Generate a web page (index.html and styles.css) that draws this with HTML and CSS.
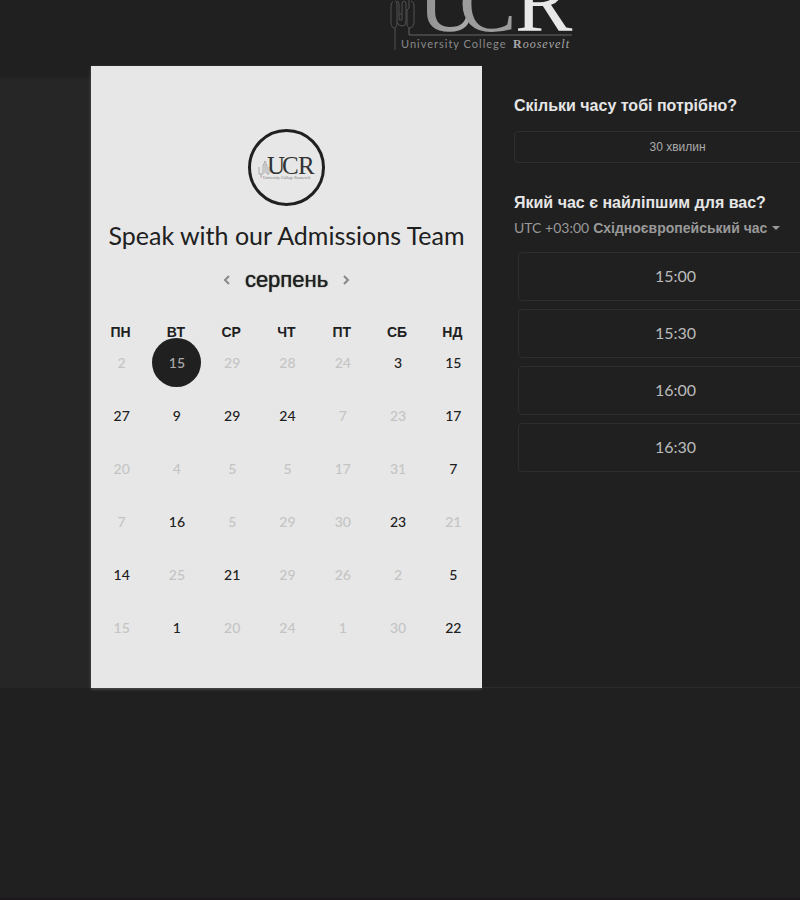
FILE: index.html
```html
<!DOCTYPE html>
<html lang="uk">
<head>
<meta charset="utf-8">
<title>Speak with our Admissions Team</title>
<link rel="stylesheet" href="styles.css">
</head>
<body>
<div class="page">
  <header class="header">
    <svg class="brand" viewBox="0 0 184 54" role="img" aria-label="University College Roosevelt">
      <defs>
        <linearGradient id="fade" x1="0" y1="0" x2="1" y2="0">
          <stop offset="0" stop-color="#8e8e8e"/>
          <stop offset="1" stop-color="#b0b0b0"/>
        </linearGradient>
      </defs>
      <g fill="none" stroke="#505050" stroke-width="1">
        <path d="M3 2q-2 0-2 4V22q0 6 4 6v22M5 28q2-1 2-5V4q0-3-2-3M7 22q1 4 5 4t4-4V4q0-3-2-3t-2 3V14H9V4q0-3-2-3M9 14v6h3v-6M19 0V8q-2 1-2 4V23q0 5 3 5t4-5V5q0-3-3-4"/>
        <path d="M19 28v7H182" stroke="#666"/>
      </g>
      <g class="brand-letters">
        <text x="28" y="31" fill="url(#fade)">U</text>
        <text x="69" y="31" fill="#9c9c9c">C</text>
        <text x="125" y="31" fill="#e8e8e8">R</text>
      </g>
      <text class="brand-name" x="11" y="48">University College</text>
      <text class="brand-roosevelt" x="123" y="48"><tspan class="brand-initial">R</tspan>oosevelt</text>
    </svg>
  </header>

  <main class="stage">
    <div class="booking">
      <section class="calendar">
        <div class="avatar">
          <svg viewBox="0 0 60 30" role="img" aria-label="UCR">
            <path d="M2 14v7h2v4M4 21h2v-8M8 20v-9M6 13l2-5 2 5v8M12 14v7h-2" fill="none" stroke="#aaa" stroke-width="1"/>
            <g class="avatar-letters">
              <text x="10" y="21">U</text>
              <text x="25" y="21">C</text>
              <text x="41" y="21">R</text>
            </g>
            <text class="avatar-name" x="6" y="26">University College Roosevelt</text>
          </svg>
        </div>
        <h1 class="title">Speak with our Admissions Team</h1>
        <div class="month">
          <button class="arrow" type="button" aria-label="Попередній місяць"><svg viewBox="0 0 8 12"><path d="M6 2 2 6l4 4"/></svg></button>
          <h2 class="month-name">серпень</h2>
          <button class="arrow" type="button" aria-label="Наступний місяць"><svg viewBox="0 0 8 12"><path d="m2 2 4 4-4 4"/></svg></button>
        </div>
        <table class="days">
          <thead>
            <tr><th>ПН</th><th>ВТ</th><th>СР</th><th>ЧТ</th><th>ПТ</th><th>СБ</th><th>НД</th></tr>
          </thead>
          <tbody>
            <tr><td><button class="day" disabled>2</button></td><td><button class="day selected">15</button></td><td><button class="day" disabled>29</button></td><td><button class="day" disabled>28</button></td><td><button class="day" disabled>24</button></td><td><button class="day">3</button></td><td><button class="day">15</button></td></tr>
            <tr><td><button class="day">27</button></td><td><button class="day">9</button></td><td><button class="day">29</button></td><td><button class="day">24</button></td><td><button class="day" disabled>7</button></td><td><button class="day" disabled>23</button></td><td><button class="day">17</button></td></tr>
            <tr><td><button class="day" disabled>20</button></td><td><button class="day" disabled>4</button></td><td><button class="day" disabled>5</button></td><td><button class="day" disabled>5</button></td><td><button class="day" disabled>17</button></td><td><button class="day" disabled>31</button></td><td><button class="day">7</button></td></tr>
            <tr><td><button class="day" disabled>7</button></td><td><button class="day">16</button></td><td><button class="day" disabled>5</button></td><td><button class="day" disabled>29</button></td><td><button class="day" disabled>30</button></td><td><button class="day">23</button></td><td><button class="day" disabled>21</button></td></tr>
            <tr><td><button class="day">14</button></td><td><button class="day" disabled>25</button></td><td><button class="day">21</button></td><td><button class="day" disabled>29</button></td><td><button class="day" disabled>26</button></td><td><button class="day" disabled>2</button></td><td><button class="day">5</button></td></tr>
            <tr><td><button class="day" disabled>15</button></td><td><button class="day">1</button></td><td><button class="day" disabled>20</button></td><td><button class="day" disabled>24</button></td><td><button class="day" disabled>1</button></td><td><button class="day" disabled>30</button></td><td><button class="day">22</button></td></tr>
          </tbody>
        </table>
      </section>

      <section class="times">
        <h2 class="question">Скільки часу тобі потрібно?</h2>
        <button class="duration" type="button">30 хвилин</button>
        <h2 class="question">Який час є найліпшим для вас?</h2>
        <div class="zone">
          <label for="zone">UTC +03:00</label>
          <select id="zone"><option>Східноєвропейський час</option></select>
          <svg class="caret" viewBox="0 0 8 4" aria-hidden="true"><path d="M0 0h8L4 4z"/></svg>
        </div>
        <div class="slots">
          <button class="slot" type="button">15:00</button>
          <button class="slot" type="button">15:30</button>
          <button class="slot" type="button">16:00</button>
          <button class="slot" type="button">16:30</button>
        </div>
      </section>
    </div>
  </main>
</div>
</body>
</html>
```
FILE: styles.css
```css
* {
  box-sizing: border-box;
}

body {
  margin: 0;
  overflow-x: hidden;
  background: #202020;
  color: #e6e6e6;
  font-family: "Liberation Sans", sans-serif;
}

h1,
h2 {
  margin: 0;
}

button,
select {
  margin: 0;
  padding: 0;
  border: 0;
  background: none;
  color: inherit;
  font: inherit;
}

.page {
  min-width: 964px;
  min-height: 100vh;
  border-bottom: 2px solid #1c171b;
}

.header {
  display: flex;
  justify-content: center;
  height: 66px;
}

.brand {
  width: 184px;
  height: 54px;
}

.brand-letters {
  font: 86px "Liberation Serif", serif;
}

.brand-name {
  fill: #8a8a8a;
  font: 11px Lato, sans-serif;
  letter-spacing: 1px;
}

.brand-roosevelt {
  fill: #a8a8a8;
  font: italic 12px "Liberation Serif", serif;
  letter-spacing: 1px;
}

.brand-initial {
  font-style: normal;
  font-weight: bold;
}

.stage {
  background: linear-gradient(#202020 10px, #262626 14px);
}

.booking {
  display: grid;
  grid-template-columns: 1fr 1fr;
  width: 782px;
  margin: 0 auto;
}

.calendar {
  display: flex;
  flex-direction: column;
  align-items: center;
  padding: 63px 2px 34px;
  background: #e7e7e7;
  box-shadow: 0 1px 3px #555;
  color: #202020;
}

.avatar {
  display: flex;
  align-items: center;
  justify-content: center;
  width: 77px;
  height: 77px;
  border: 3px solid #202020;
  border-radius: 50%;
}

.avatar svg {
  width: 60px;
  height: 30px;
}

.avatar-letters {
  fill: #333;
  font: 25px "Liberation Serif", serif;
}

.avatar-name {
  fill: #777;
  font: 4px "Liberation Serif", serif;
}

.title {
  margin-top: 13px;
  font: 25px/32px Lato, sans-serif;
  white-space: nowrap;
}

.month {
  display: flex;
  align-items: center;
  gap: 14px;
  margin-top: 13px;
}

.month-name {
  font-size: 22px;
  font-weight: normal;
  line-height: 32px;
  text-shadow: 0 0 1px #202020;
}

.arrow {
  display: flex;
}

.arrow svg {
  width: 8px;
  height: 12px;
  fill: none;
  stroke: #888;
  stroke-width: 2;
}

.days {
  width: 100%;
  margin-top: 32px;
  border-collapse: collapse;
  table-layout: fixed;
}

.days th {
  padding: 0;
  font-size: 14px;
  line-height: 8px;
}

.days td {
  height: 53px;
  padding: 0 0 0 2px;
}

.day {
  display: block;
  width: 49px;
  height: 49px;
  margin: 0 auto;
  border-radius: 50%;
  font: 500 14px Lato, sans-serif;
}

.day:disabled {
  color: #c4c4c4;
}

.day.selected {
  background: #202020;
  color: #aaa;
}

.times {
  padding: 30px 32px;
  border-bottom: 1px solid #2b2b2b;
  background: #202020;
}

.question {
  font-size: 16px;
  line-height: 20px;
}

.duration {
  display: block;
  width: 100%;
  height: 32px;
  margin: 15px 0 30px;
  border: 1px solid #2e2e2e;
  border-radius: 4px;
  color: #aaa;
  font-size: 12px;
}

.zone {
  display: flex;
  align-items: center;
  gap: 4px;
  margin-top: 5px;
  color: #999;
  font-size: 14px;
  line-height: 20px;
}

.zone label {
  font-family: Lato, sans-serif;
}

.zone select {
  appearance: none;
  font-weight: bold;
}

.caret {
  width: 8px;
  height: 4px;
  fill: #999;
}

.slots {
  display: grid;
  gap: 8px;
  margin: 14px 4px 0;
}

.slot {
  height: 49px;
  padding: 0 4px 2px 0;
  border: 1px solid #2e2e2e;
  border-radius: 4px;
  color: #bbb;
  font: 16px Lato, sans-serif;
}
```
